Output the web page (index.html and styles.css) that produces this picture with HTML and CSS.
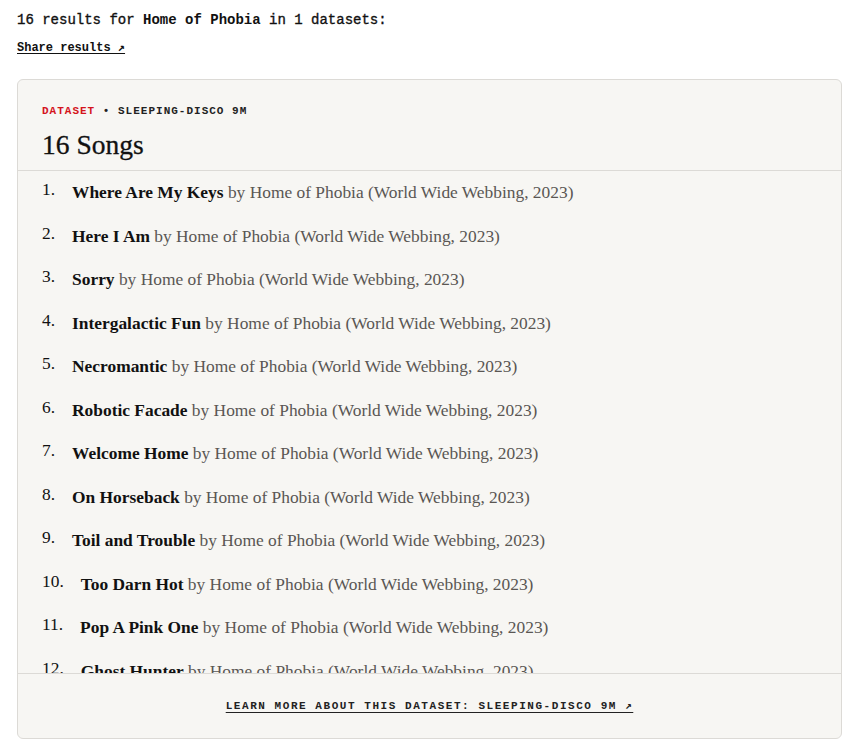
FILE: index.html
```html
<!DOCTYPE html>
<html lang="en">
<head>
    <meta charset="utf-8">
    <title>Search results</title>
    <meta name="viewport" content="width=device-width, initial-scale=1.0">
    <link rel="stylesheet" href="styles.css">
</head>
<body>
    <div class="page">
        <p class="summary">16 results for <b>Home of Phobia</b> in 1 datasets:</p>
        <a class="share" href="#">Share results &#8599;</a>

        <section class="dataset">
            <header class="dataset-head">
                <div class="meta"><span class="tag">DATASET</span> &bull; SLEEPING-DISCO 9M</div>
                <h2 class="count">16 Songs</h2>
            </header>
            <ol class="songs">
                <li><span class="num">1.</span><span><b>Where Are My Keys</b> by Home of Phobia (World Wide Webbing, 2023)</span></li>
                <li><span class="num">2.</span><span><b>Here I Am</b> by Home of Phobia (World Wide Webbing, 2023)</span></li>
                <li><span class="num">3.</span><span><b>Sorry</b> by Home of Phobia (World Wide Webbing, 2023)</span></li>
                <li><span class="num">4.</span><span><b>Intergalactic Fun</b> by Home of Phobia (World Wide Webbing, 2023)</span></li>
                <li><span class="num">5.</span><span><b>Necromantic</b> by Home of Phobia (World Wide Webbing, 2023)</span></li>
                <li><span class="num">6.</span><span><b>Robotic Facade</b> by Home of Phobia (World Wide Webbing, 2023)</span></li>
                <li><span class="num">7.</span><span><b>Welcome Home</b> by Home of Phobia (World Wide Webbing, 2023)</span></li>
                <li><span class="num">8.</span><span><b>On Horseback</b> by Home of Phobia (World Wide Webbing, 2023)</span></li>
                <li><span class="num">9.</span><span><b>Toil and Trouble</b> by Home of Phobia (World Wide Webbing, 2023)</span></li>
                <li><span class="num">10.</span><span><b>Too Darn Hot</b> by Home of Phobia (World Wide Webbing, 2023)</span></li>
                <li><span class="num">11.</span><span><b>Pop A Pink One</b> by Home of Phobia (World Wide Webbing, 2023)</span></li>
                <li><span class="num">12.</span><span><b>Ghost Hunter</b> by Home of Phobia (World Wide Webbing, 2023)</span></li>
                <li><span class="num">13.</span><span><b>Lost Signal</b> by Home of Phobia (World Wide Webbing, 2023)</span></li>
                <li><span class="num">14.</span><span><b>Midnight Static</b> by Home of Phobia (World Wide Webbing, 2023)</span></li>
                <li><span class="num">15.</span><span><b>Haunted Disco</b> by Home of Phobia (World Wide Webbing, 2023)</span></li>
                <li><span class="num">16.</span><span><b>Goodnight Phobia</b> by Home of Phobia (World Wide Webbing, 2023)</span></li>
            </ol>
            <footer class="dataset-foot">
                <a class="more" href="#">LEARN MORE ABOUT THIS DATASET: SLEEPING-DISCO 9M &#8599;</a>
            </footer>
        </section>
    </div>
</body>
</html>
```
FILE: styles.css
```css
*{
    margin:0;
    padding:0;
    box-sizing:border-box;
}
body{
    background-color:#fff;
    color:#111;
    font-family:"Liberation Mono", "Courier New", monospace;
}
.page{
    padding:10px 7px 0 17px;
}
.summary{
    font-size:14px;
    line-height:20px;
    -webkit-text-stroke:0.35px #111;
}
.summary b{
    -webkit-text-stroke:0;
}
.share{
    display:inline-block;
    margin-top:10px;
    font-size:12px;
    line-height:16px;
    font-weight:bold;
    color:#111;
    text-underline-offset:2px;
}

/* dataset card */
.dataset{
    margin-top:23px;
    background-color:#f7f6f3;
    border:1px solid #dcdad6;
    border-radius:6px;
    display:flex;
    flex-direction:column;
}
.dataset-head{
    padding:23px 24px 9px;
    border-bottom:1px solid #dcdad6;
}
.meta{
    font-size:11px;
    line-height:16px;
    font-weight:bold;
    letter-spacing:1px;
    color:#222;
}
.tag{
    color:#d4141c;
}
.count{
    margin-top:10px;
    font-family:"Liberation Serif", "Times New Roman", serif;
    font-size:27.5px;
    line-height:32px;
    font-weight:normal;
    color:#111;
    -webkit-text-stroke:0.3px #111;
}

/* song list, scrolls inside the card */
.songs{
    list-style:none;
    height:502px;
    overflow-y:auto;
    scrollbar-width:none;
    padding:0 24px;
    font-family:"Liberation Serif", "Times New Roman", serif;
    font-size:17.4px;
    color:#5a5653;
}
.songs li{
    display:flex;
    gap:17px;
    padding:8px 0;
    line-height:27.5px;
}
.songs .num{
    color:#111;
    margin-top:-3px;
}
.songs b{
    color:#111;
}

.dataset-foot{
    border-top:1px solid #dcdad6;
    padding:22px 24px 24px;
    text-align:center;
}
.more{
    font-size:11px;
    line-height:16px;
    font-weight:bold;
    letter-spacing:1.55px;
    color:#222;
    text-underline-offset:3px;
}
```
